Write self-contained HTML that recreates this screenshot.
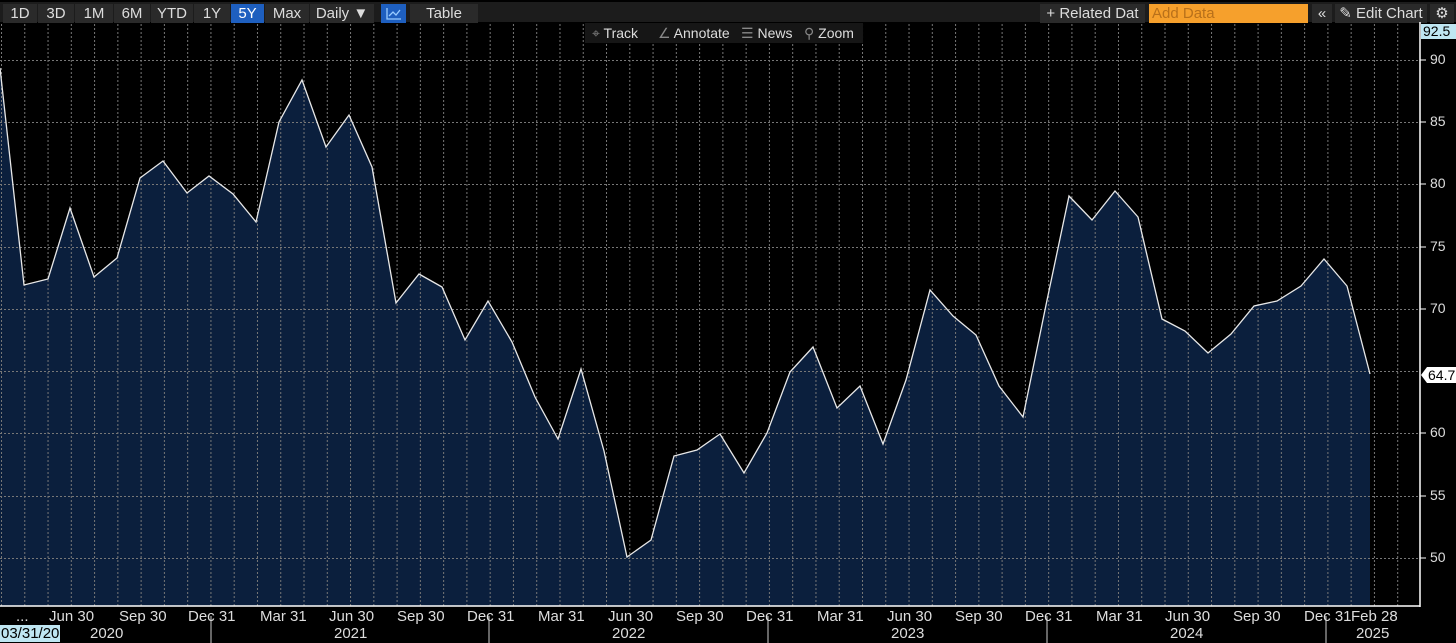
<!DOCTYPE html>
<html><head><meta charset="utf-8"><style>
body{margin:0;width:1456px;height:643px;background:#000;overflow:hidden;font-family:"Liberation Sans",sans-serif;position:relative}
.tb{position:absolute;left:0;top:0;width:1456px;height:22px;background:#1c1c1c;border-top:2px solid #000;box-sizing:border-box}
.b{position:absolute;top:2px;height:19px;line-height:19px;color:#ddd;font-size:15px;text-align:center;background:#2a2a2a}
.t{position:absolute;color:#ddd;font-size:14px}
.ax{position:absolute;color:#ddd;font-size:14px}
</style></head><body>
<div style="position:absolute;top:0;left:0;width:1456px;height:2px">
<div style="position:absolute;left:0;width:105px;height:2px;background:#e59a2a"></div>
<div style="position:absolute;left:135px;width:215px;height:2px;background:#e59a2a"></div>
<div style="position:absolute;left:372px;width:250px;height:2px;background:#e59a2a"></div>
</div>
<div class="tb">
<div class="b" style="left:3px;width:34px">1D</div>
<div class="b" style="left:38px;width:36px">3D</div>
<div class="b" style="left:75px;width:38px">1M</div>
<div class="b" style="left:114px;width:36px">6M</div>
<div class="b" style="left:151px;width:42px">YTD</div>
<div class="b" style="left:194px;width:36px">1Y</div>
<div class="b" style="left:231px;width:33px;background:#1e5fbf;color:#fff">5Y</div>
<div class="b" style="left:265px;width:44px">Max</div>
<div class="b" style="left:310px;width:64px">Daily ▼</div>
<div class="b" style="left:381px;width:25px;background:#1e5fbf"><svg width="18" height="14" viewBox="0 0 18 14" style="margin-top:3px"><path d="M2 1V12H16M4 9L8 5L11 8L15 3" stroke="#9cf" fill="none" stroke-width="1.3"/></svg></div>
<div class="b" style="left:410px;width:68px">Table</div>
<div class="b" style="left:1040px;width:105px">+ Related Dat</div>
<div class="b" style="left:1149px;width:159px;background:#f6a02c;color:#b8701a;text-align:left;padding-left:3px;box-sizing:border-box">Add Data</div>
<div class="b" style="left:1312px;width:20px">«</div>
<div class="b" style="left:1335px;width:92px">✎ Edit Chart</div>
<div class="b" style="left:1430px;width:24px">⚙</div>
</div>
<svg width="1456" height="643" style="position:absolute;left:0;top:0">
<defs>
<pattern id="vg" x="1" y="0" width="23.27" height="4" patternUnits="userSpaceOnUse"><rect x="0" y="0" width="1" height="2" fill="#777"/></pattern>
<pattern id="hg" x="0" y="0" width="4" height="1" patternUnits="userSpaceOnUse"><rect width="2" height="1" fill="#777"/></pattern>
</defs>
<polygon fill="#0b1f3d" points="0,606 0,68 24,285 48,279 70,208 94,277 117,258 140,178 163,161 187,193 209,176 233,194 256,222 279,122 302,80 326,147 349,115 372,167 396,303 419,274 442,287 465,340 488,301 512,342 535,397 558,439 581,369 604,451 627,557 651,540 674,456 697,450 720,434 744,473 767,433 790,372 813,347 837,408 860,386 883,444 906,380 930,290 953,316 976,335 999,386 1023,417 1046,305 1069,196 1092,220 1115,191 1138,217 1162,319 1185,331 1208,353 1231,334 1254,306 1277,301 1301,286 1324,259 1347,286 1370,374 1370,606"/>
<rect x="0" y="22" width="1419" height="584" fill="url(#vg)"/>
<g fill="url(#hg)">
<rect x="0" y="60" width="1419" height="1"/><rect x="0" y="122" width="1419" height="1"/><rect x="0" y="184" width="1419" height="1"/><rect x="0" y="247" width="1419" height="1"/><rect x="0" y="309" width="1419" height="1"/><rect x="0" y="371" width="1419" height="1"/><rect x="0" y="433" width="1419" height="1"/><rect x="0" y="496" width="1419" height="1"/><rect x="0" y="558" width="1419" height="1"/>
</g>
<polyline fill="none" stroke="#e8e8e8" stroke-width="1.3" points="0,68 24,285 48,279 70,208 94,277 117,258 140,178 163,161 187,193 209,176 233,194 256,222 279,122 302,80 326,147 349,115 372,167 396,303 419,274 442,287 465,340 488,301 512,342 535,397 558,439 581,369 604,451 627,557 651,540 674,456 697,450 720,434 744,473 767,433 790,372 813,347 837,408 860,386 883,444 906,380 930,290 953,316 976,335 999,386 1023,417 1046,305 1069,196 1092,220 1115,191 1138,217 1162,319 1185,331 1208,353 1231,334 1254,306 1277,301 1301,286 1324,259 1347,286 1370,374"/>
<line x1="1420" y1="22" x2="1420" y2="607" stroke="#fff" stroke-width="1.5"/>
<line x1="0" y1="606" x2="1420" y2="606" stroke="#fff" stroke-width="1.5"/>
<g stroke="#ccc"><line x1="211" y1="616" x2="211" y2="643"/><line x1="489" y1="616" x2="489" y2="643"/><line x1="768" y1="616" x2="768" y2="643"/><line x1="1047" y1="616" x2="1047" y2="643"/><line x1="1326" y1="616" x2="1326" y2="643"/></g>
<g stroke="#fff"><line x1="1420" y1="60" x2="1426" y2="60"/><line x1="1420" y1="122" x2="1426" y2="122"/><line x1="1420" y1="184" x2="1426" y2="184"/><line x1="1420" y1="247" x2="1426" y2="247"/><line x1="1420" y1="309" x2="1426" y2="309"/><line x1="1420" y1="433" x2="1426" y2="433"/><line x1="1420" y1="496" x2="1426" y2="496"/><line x1="1420" y1="558" x2="1426" y2="558"/></g>
<polygon points="1421,375 1427,367 1456,367 1456,383 1427,383" fill="#fff"/>
<text x="1428" y="380" font-size="14" fill="#000" font-family="Liberation Sans">64.7</text>
<rect x="1421" y="24" width="35" height="15" fill="#bfe6f2"/>
<text x="1423" y="36" font-size="14" fill="#000" font-family="Liberation Sans">92.5</text>
</svg>
<div style="position:absolute;left:585px;top:23px;width:278px;height:20px;background:#161616"></div>
<div class="t" style="left:592px;top:25px;color:#888">⌖ <span style="color:#ddd">Track</span></div>
<div class="t" style="left:658px;top:25px;color:#888">∠ <span style="color:#ddd">Annotate</span></div>
<div class="t" style="left:741px;top:25px;color:#888">☰ <span style="color:#ddd">News</span></div>
<div class="t" style="left:804px;top:25px;color:#888">⚲ <span style="color:#ddd">Zoom</span></div>
<div class="ax" style="left:1430px;top:51px">90</div>
<div class="ax" style="left:1430px;top:113px">85</div>
<div class="ax" style="left:1430px;top:175px">80</div>
<div class="ax" style="left:1430px;top:238px">75</div>
<div class="ax" style="left:1430px;top:300px">70</div>
<div class="ax" style="left:1430px;top:424px">60</div>
<div class="ax" style="left:1430px;top:487px">55</div>
<div class="ax" style="left:1430px;top:549px">50</div>
<div style="position:absolute;left:0;top:608px;width:1456px;font-size:15px;color:#ddd">
<span style="position:absolute;left:16px">...</span>
<span style="position:absolute;left:49px">Jun 30</span>
<span style="position:absolute;left:119px">Sep 30</span>
<span style="position:absolute;left:188px">Dec 31</span>
<span style="position:absolute;left:260px">Mar 31</span>
<span style="position:absolute;left:329px">Jun 30</span>
<span style="position:absolute;left:397px">Sep 30</span>
<span style="position:absolute;left:467px">Dec 31</span>
<span style="position:absolute;left:538px">Mar 31</span>
<span style="position:absolute;left:608px">Jun 30</span>
<span style="position:absolute;left:676px">Sep 30</span>
<span style="position:absolute;left:746px">Dec 31</span>
<span style="position:absolute;left:817px">Mar 31</span>
<span style="position:absolute;left:887px">Jun 30</span>
<span style="position:absolute;left:955px">Sep 30</span>
<span style="position:absolute;left:1025px">Dec 31</span>
<span style="position:absolute;left:1096px">Mar 31</span>
<span style="position:absolute;left:1165px">Jun 30</span>
<span style="position:absolute;left:1233px">Sep 30</span>
<span style="position:absolute;left:1304px">Dec 31</span>
<span style="position:absolute;left:1351px">Feb 28</span>
</div>
<div style="position:absolute;left:0;top:625px;width:1456px;font-size:15px;color:#ddd">
<span style="position:absolute;left:0;background:#bfe6f2;color:#000;padding:0 1px">03/31/20</span>
<span style="position:absolute;left:90px">2020</span>
<span style="position:absolute;left:334px">2021</span>
<span style="position:absolute;left:612px">2022</span>
<span style="position:absolute;left:891px">2023</span>
<span style="position:absolute;left:1170px">2024</span>
<span style="position:absolute;left:1356px">2025</span>
</div>
</body></html>
